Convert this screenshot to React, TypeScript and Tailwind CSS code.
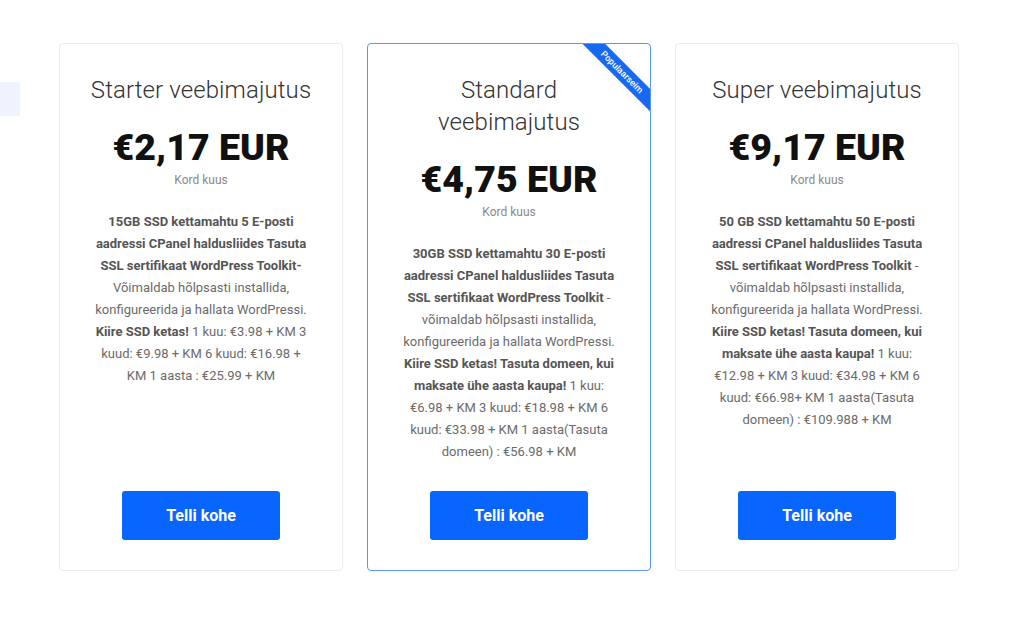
import React from 'react';

interface PlanProps {
  title: string;
  price: string;
  children: React.ReactNode;
  popular?: boolean;
}

const Plan: React.FC<PlanProps> = ({ title, price, children, popular }) => {
  return (
    <div
      className={
        'relative flex w-[284px] h-[528px] flex-col items-center rounded-[4px] border bg-white px-[30px] pt-[30px] pb-[30px] text-center ' +
        (popular ? 'border-[#5d95f2]' : 'border-[#ececec]')
      }
    >
      {popular && (
        <div className="absolute top-0 right-0 h-[80px] w-[80px] overflow-hidden rounded-tr-[4px]">
          <div className="absolute top-[20px] right-[-28px] flex h-[16px] w-[112px] rotate-45 items-center justify-center bg-[#1769f2] text-[9px] leading-none font-medium text-white">
            Populaarseim
          </div>
        </div>
      )}
      <h3 className="text-[24px] leading-[32px] font-light tracking-[0.1px] text-[#333]">{title}</h3>
      <div className="mt-[19px] text-[37.5px] leading-[44px] font-black text-[#111]">{price}</div>
      <div className="mt-[2px] text-[12px] leading-[18px] text-[#8a8a8a]">Kord kuus</div>
      <p className="mt-[22px] text-[13px] leading-[22px] text-[#6b6b6b]">{children}</p>
      <button className="mt-auto h-[49px] w-[158px] rounded-[3px] bg-[#0866ff] text-[16px] font-bold text-white">
        Telli kohe
      </button>
    </div>
  );
};

export default function App() {
  return (
    <div className="min-h-[619px] w-[1024px] bg-white font-['Roboto',sans-serif]">
      <div className="flex items-start pt-[43px]">
        <div className="mt-[39px] h-[34px] w-[20px] rounded-r-[3px] bg-[#eef3fd]" />
        <div className="ml-[39px] flex gap-[24px]">
          <Plan title="Starter veebimajutus" price="€2,17 EUR">
            <b className="text-[#555]">
              15GB SSD kettamahtu 5 E-posti aadressi CPanel haldusliides Tasuta SSL sertifikaat WordPress Toolkit-
            </b>
            Võimaldab hõlpsasti installida, konfigureerida ja hallata WordPressi.{' '}
            <b className="text-[#555]">Kiire SSD ketas!</b> 1 kuu: €3.98 + KM 3 kuud: €9.98 + KM 6 kuud: €16.98 + KM 1
            aasta : €25.99 + KM
          </Plan>
          <Plan title="Standard veebimajutus" price="€4,75 EUR" popular>
            <b className="text-[#555]">
              30GB SSD kettamahtu 30 E-posti aadressi CPanel haldusliides Tasuta SSL sertifikaat WordPress Toolkit
            </b>{' '}
            - võimaldab hõlpsasti installida, konfigureerida ja hallata WordPressi.{' '}
            <b className="text-[#555]">Kiire SSD ketas! Tasuta domeen, kui maksate ühe aasta kaupa!</b> 1 kuu: €6.98 +
            KM 3 kuud: €18.98 + KM 6 kuud: €33.98 + KM 1 aasta(Tasuta domeen) : €56.98 + KM
          </Plan>
          <Plan title="Super veebimajutus" price="€9,17 EUR">
            <b className="text-[#555]">
              50 GB SSD kettamahtu 50 E-posti aadressi CPanel haldusliides Tasuta SSL sertifikaat WordPress Toolkit
            </b>{' '}
            - võimaldab hõlpsasti installida, konfigureerida ja hallata WordPressi.{' '}
            <b className="text-[#555]">Kiire SSD ketas! Tasuta domeen, kui maksate ühe aasta kaupa!</b> 1 kuu: €12.98 +
            KM 3 kuud: €34.98 + KM 6 kuud: €66.98+ KM 1 aasta(Tasuta domeen) : €109.988 + KM
          </Plan>
        </div>
      </div>
    </div>
  );
}
